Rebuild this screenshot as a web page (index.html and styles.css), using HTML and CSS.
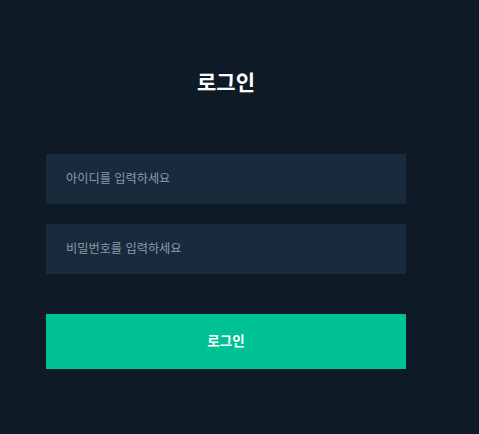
FILE: index.html
```html
<!DOCTYPE html>
<html lang="ko">
<head>
<meta charset="utf-8">
<link rel="stylesheet" href="styles.css">
</head>
<body>
<div class="login">
  <h1 class="login-title">로그인</h1>
  <form class="login-form">
    <input class="login-input" type="text" placeholder="아이디를 입력하세요">
    <input class="login-input" type="password" placeholder="비밀번호를 입력하세요">
    <button class="login-button" type="button">로그인</button>
  </form>
</div>
</body>
</html>
```

FILE: styles.css
```css
html, body {
  margin: 0;
  padding: 0;
  background: #0e1b26;
  height: 100%;
}
body {
  font-family: "Noto Sans CJK KR", "Noto Sans", sans-serif;
}
.login {
  width: 360px;
  margin-left: 46px;
  padding-top: 66px;
}
.login-title {
  margin: 0;
  height: 30px;
  line-height: 30px;
  text-align: center;
  color: #ffffff;
  font-size: 21px;
  font-weight: 700;
}
.login-form {
  display: flex;
  flex-direction: column;
  gap: 20px;
  margin-top: 58px;
}
.login-input {
  box-sizing: border-box;
  height: 50px;
  width: 100%;
  border: 0;
  margin: 0;
  padding: 0 20px 2px;
  background: #172b3d;
  color: #ffffff;
  font-family: inherit;
  font-size: 12.2px;
  outline: none;
}
.login-input::placeholder {
  color: #8c9aa6;
  opacity: 1;
}
.login-button {
  box-sizing: border-box;
  height: 55px;
  margin-top: 20px;
  padding: 0 0 3px;
  border: 0;
  background: #00c196;
  color: #ffffff;
  font-family: inherit;
  font-size: 13.5px;
  font-weight: 700;
  cursor: pointer;
}
```
